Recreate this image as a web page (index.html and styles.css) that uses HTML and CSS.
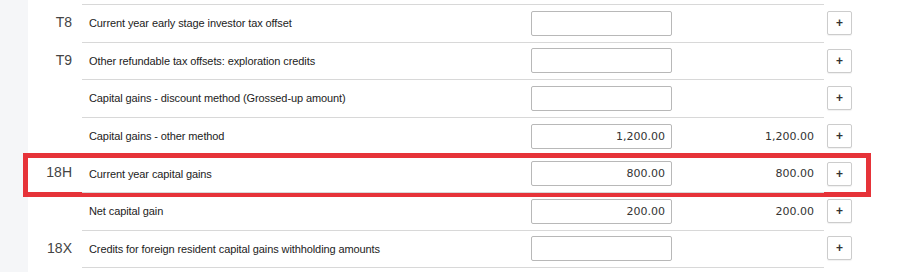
FILE: index.html
```html
<!DOCTYPE html>
<html>
<head>
<meta charset="utf-8">
<link rel="stylesheet" href="styles.css">
</head>
<body>
<div class="page">
  <div class="sidebar"></div>
  <div class="list">
    <div class="row">
      <div class="code">T8</div>
      <div class="cells">
        <div class="label">Current year early stage investor tax offset</div>
        <div class="field"><input class="amount" type="text" value=""></div>
        <div class="value"></div>
      </div>
      <div class="action"><button class="add">+</button></div>
    </div>
    <div class="row">
      <div class="code">T9</div>
      <div class="cells">
        <div class="label">Other refundable tax offsets: exploration credits</div>
        <div class="field"><input class="amount" type="text" value=""></div>
        <div class="value"></div>
      </div>
      <div class="action"><button class="add">+</button></div>
    </div>
    <div class="row">
      <div class="code"></div>
      <div class="cells">
        <div class="label">Capital gains - discount method (Grossed-up amount)</div>
        <div class="field"><input class="amount" type="text" value=""></div>
        <div class="value"></div>
      </div>
      <div class="action"><button class="add">+</button></div>
    </div>
    <div class="row">
      <div class="code"></div>
      <div class="cells">
        <div class="label">Capital gains - other method</div>
        <div class="field"><input class="amount" type="text" value="1,200.00"></div>
        <div class="value">1,200.00</div>
      </div>
      <div class="action"><button class="add">+</button></div>
    </div>
    <div class="row highlight">
      <div class="code">18H</div>
      <div class="cells">
        <div class="label">Current year capital gains</div>
        <div class="field"><input class="amount" type="text" value="800.00"></div>
        <div class="value">800.00</div>
      </div>
      <div class="action"><button class="add">+</button></div>
    </div>
    <div class="row">
      <div class="code"></div>
      <div class="cells">
        <div class="label">Net capital gain</div>
        <div class="field"><input class="amount" type="text" value="200.00"></div>
        <div class="value">200.00</div>
      </div>
      <div class="action"><button class="add">+</button></div>
    </div>
    <div class="row last">
      <div class="code">18X</div>
      <div class="cells">
        <div class="label">Credits for foreign resident capital gains withholding amounts</div>
        <div class="field"><input class="amount" type="text" value=""></div>
        <div class="value"></div>
      </div>
      <div class="action"><button class="add">+</button></div>
    </div>
  </div>
</div>
</body>
</html>
```
FILE: styles.css
```css
html, body {
  margin: 0;
  padding: 0;
  background: #ffffff;
}
body {
  font-family: "Liberation Sans", Arial, sans-serif;
  color: #222;
  overflow: hidden;
}
.page {
  display: flex;
  height: 272px;
}
.sidebar {
  width: 28px;
  flex: none;
  background: #f5f6f8;
}
.list {
  flex: 1;
  padding-top: 4px;
}
.row {
  display: flex;
  height: 37.6px;
  position: relative;
}
.code {
  width: 54px;
  flex: none;
  box-sizing: border-box;
  padding-right: 10px;
  text-align: right;
  font-size: 14px;
  color: #444;
  line-height: 37.6px;
}
.cells {
  width: 742px;
  flex: none;
  display: flex;
  align-items: center;
  border-top: 1px solid #d8d8d8;
  box-sizing: border-box;
}
.last {
  height: 38.6px;
}
.last .cells {
  border-bottom: 1px solid #d8d8d8;
}
.last .code {
  line-height: 37.6px;
}
.label {
  width: 449px;
  flex: none;
  box-sizing: border-box;
  padding-left: 7px;
  font-size: 11px;
  letter-spacing: -0.1px;
  color: #222;
}
.field {
  width: 141px;
  flex: none;
}
.amount {
  display: block;
  width: 141px;
  height: 25px;
  box-sizing: border-box;
  margin: 0;
  border: 1px solid #b8b8b8;
  border-radius: 2px;
  padding: 0 6px;
  text-align: right;
  font-family: "DejaVu Sans", Verdana, sans-serif;
  font-size: 11px;
  color: #333;
  background: #fff;
  outline: none;
}
.value {
  width: 152px;
  flex: none;
  box-sizing: border-box;
  padding-right: 10px;
  text-align: right;
  font-family: "DejaVu Sans", Verdana, sans-serif;
  font-size: 11px;
  color: #333;
}
.action {
  flex: none;
  display: flex;
  align-items: center;
  padding-left: 3px;
  padding-top: 1px;
}
.last .action {
  padding-top: 0;
  padding-bottom: 1px;
}
.add {
  width: 25px;
  height: 24px;
  margin: 0;
  padding: 0;
  border: 1px solid #cccccc;
  border-radius: 2px;
  background: #ffffff;
  box-shadow: 0 1px 1px rgba(0,0,0,0.06);
  font-family: "Liberation Sans", Arial, sans-serif;
  font-size: 12px;
  font-weight: bold;
  color: #333;
  line-height: 20px;
}
.highlight::after {
  content: "";
  position: absolute;
  left: -5px;
  top: -1.6px;
  width: 848px;
  height: 44.5px;
  box-sizing: border-box;
  border: 5px solid #e63339;
  pointer-events: none;
}
```
